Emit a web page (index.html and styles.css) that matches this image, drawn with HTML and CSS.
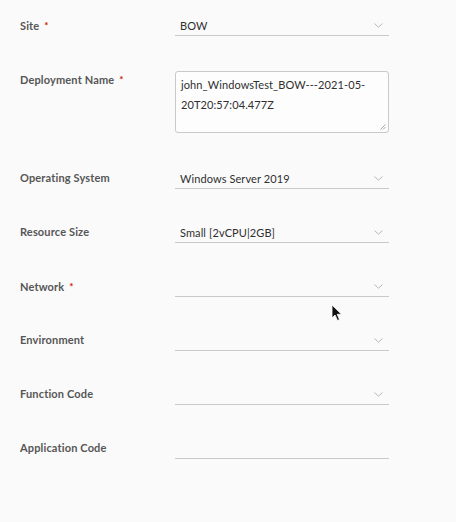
FILE: index.html
```html
<!DOCTYPE html>
<html>
<head>
<meta charset="utf-8">
<link rel="stylesheet" href="styles.css">
</head>
<body>
<form class="form">
  <div class="row">
    <div class="label">Site <span class="req">*</span></div>
    <div class="select"><span class="value">BOW</span><svg class="chev" width="9" height="5" viewBox="0 0 9 5"><polyline points="0.5,0.5 4.5,4.2 8.5,0.5" fill="none" stroke="#b0b0b0" stroke-width="0.9"/></svg></div>
  </div>
  <div class="row row-tall">
    <div class="label">Deployment Name <span class="req">*</span></div>
    <div class="textarea"><div class="ta-text">john_WindowsTest_BOW---2021-05-<br>20T20:57:04.477Z</div><svg class="grip" width="6" height="6" viewBox="0 0 6 6"><line x1="0.5" y1="5.5" x2="5.5" y2="0.5" stroke="#999" stroke-width="0.8"/><line x1="3" y1="5.5" x2="5.5" y2="3" stroke="#999" stroke-width="0.8"/></svg></div>
  </div>
  <div class="row">
    <div class="label">Operating System</div>
    <div class="select"><span class="value">Windows Server 2019</span><svg class="chev" width="9" height="5" viewBox="0 0 9 5"><polyline points="0.5,0.5 4.5,4.2 8.5,0.5" fill="none" stroke="#b0b0b0" stroke-width="0.9"/></svg></div>
  </div>
  <div class="row">
    <div class="label">Resource Size</div>
    <div class="select"><span class="value">Small [2vCPU|2GB]</span><svg class="chev" width="9" height="5" viewBox="0 0 9 5"><polyline points="0.5,0.5 4.5,4.2 8.5,0.5" fill="none" stroke="#b0b0b0" stroke-width="0.9"/></svg></div>
  </div>
  <div class="row">
    <div class="label">Network <span class="req">*</span></div>
    <div class="select"><span class="value"></span><svg class="chev" width="9" height="5" viewBox="0 0 9 5"><polyline points="0.5,0.5 4.5,4.2 8.5,0.5" fill="none" stroke="#b0b0b0" stroke-width="0.9"/></svg></div>
  </div>
  <div class="row">
    <div class="label">Environment</div>
    <div class="select"><span class="value"></span><svg class="chev" width="9" height="5" viewBox="0 0 9 5"><polyline points="0.5,0.5 4.5,4.2 8.5,0.5" fill="none" stroke="#b0b0b0" stroke-width="0.9"/></svg></div>
  </div>
  <div class="row">
    <div class="label">Function Code</div>
    <div class="select"><span class="value"></span><svg class="chev" width="9" height="5" viewBox="0 0 9 5"><polyline points="0.5,0.5 4.5,4.2 8.5,0.5" fill="none" stroke="#b0b0b0" stroke-width="0.9"/></svg></div>
  </div>
  <div class="row">
    <div class="label">Application Code</div>
    <div class="select"><span class="value"></span></div>
  </div>
</form>
<svg class="cursor" width="12" height="18" viewBox="0 0 12 18"><path d="M1 1 L1 14 L4 11 L6.5 16.5 L8.5 15.6 L6.2 10.3 L10.5 10.3 Z" fill="#111" stroke="#fff" stroke-width="0.8"/></svg>
</body>
</html>
```
FILE: styles.css
```css
html, body {
  margin: 0;
  padding: 0;
  background: #fafafa;
  width: 456px;
  height: 522px;
  overflow: hidden;
  position: relative;
}
.form {
  padding: 12px 0 0 20px;
  font-family: Lato, "Liberation Sans", sans-serif;
}
.row {
  display: grid;
  grid-template-columns: 155px 214px;
  align-items: start;
  margin-bottom: 30px;
}
.row-tall {
  margin-bottom: 32px;
}
.label {
  font-size: 11px;
  font-weight: 700;
  color: #565656;
  line-height: 22px;
  padding-top: 2px;
  height: 22px;
  letter-spacing: 0.15px;
}
.req {
  color: #c92100;
  font-size: 10px;
  vertical-align: 1px;
  margin-left: 2px;
}
.select {
  height: 23px;
  border-bottom: 1px solid #c9c9c9;
  display: flex;
  align-items: center;
  justify-content: space-between;
  padding: 0 6px 0 5px;
}
.value {
  font-size: 11px;
  color: #2f2f2f;
  line-height: 20px;
  padding-top: 4px;
  letter-spacing: 0.1px;
}
.chev {
  display: block;
  margin-top: 3px;
}
.textarea {
  margin-top: 5px;
  height: 60px;
  border: 1px solid #c9c9c9;
  border-radius: 3px;
  background: #fdfdfd;
  position: relative;
  padding: 0 5px;
}
.ta-text {
  font-size: 11px;
  color: #2f2f2f;
  line-height: 20px;
  padding-top: 3px;
  letter-spacing: 0.1px;
}
.grip {
  position: absolute;
  right: 2px;
  bottom: 2px;
}
.cursor {
  position: absolute;
  left: 331px;
  top: 304px;
}
```
